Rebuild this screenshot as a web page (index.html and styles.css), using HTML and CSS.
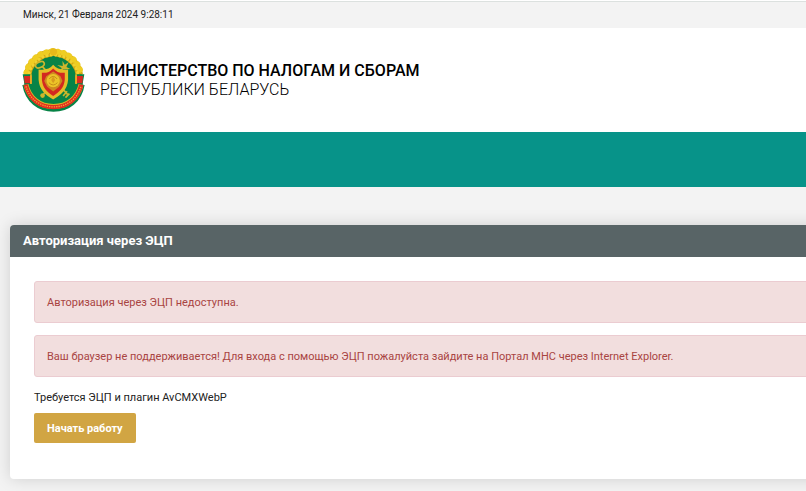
FILE: index.html
```html
<!DOCTYPE html>
<html lang="ru">
<head>
    <meta charset="UTF-8">
    <meta name="viewport" content="width=device-width, initial-scale=1">
    <title>Авторизация через ЭЦП</title>
    <link rel="stylesheet" href="styles.css">
</head>
<body>
    <div class="topbar">Минск, 21 Февраля 2024 9:28:11</div>

    <header class="header">
        <svg class="emblem" viewBox="24 24 190 192" aria-hidden="true">
            <circle cx="119" cy="124" r="88" fill="#078347"/>
            <!-- laurel wreath -->
            <path d="M41 104C45 75 65 55 88 44L119 36L150 44C173 55 193 75 197 104" fill="none" stroke="#d3a714" stroke-width="22"/>
            <path d="M37 98C41 73 60 52 86 39L119 32L152 39C178 52 197 73 201 98" fill="none" stroke="#efcd22" stroke-width="18" stroke-linecap="round" stroke-dasharray="1 17"/>
            <path d="M46 99C50 78 68 60 90 49L119 43L148 49C170 60 188 78 192 99" fill="none" stroke="#f0d22e" stroke-width="9" stroke-linecap="round" stroke-dasharray="1 12"/>
            <circle cx="119" cy="35" r="11" fill="#e6b91a"/>
            <!-- ribbon -->
            <path d="M26 103H54V136H32Z M184 103H212L206 136H184Z" fill="#078347"/>
            <path d="M30 108H54V130H32Z M184 108H208L206 130H184Z" fill="#d92a22"/>
            <path d="M51 103V132M187 103V132" stroke="#e9bd24" stroke-width="5"/>
            <path d="M32 134C40 182 75 209 119 209S198 182 206 134" fill="none" stroke="#078347" stroke-width="14"/>
            <path d="M36 134C46 176 78 200 119 200S192 176 202 134" fill="none" stroke="#d9b527" stroke-width="15"/>
            <path d="M35 134C45 178 78 202 119 202S193 178 203 134" fill="none" stroke="#e32d20" stroke-width="13"/>
            <path d="M36 139C47 178 79 201 119 201S191 178 202 139" fill="none" stroke="#f4a632" stroke-width="4" stroke-dasharray="4 3"/>
            <!-- key, caduceus and their lower ends -->
            <g fill="none" stroke="#cdb62d" stroke-width="5">
                <ellipse cx="78" cy="74" rx="14" ry="8" transform="rotate(-25 78 74)"/>
                <path d="M85 79L162 164M153 76L86 167"/>
                <path d="M148 168L160 154M155 173L167 161"/>
            </g>
            <path d="M150 88L130 75L147 78L146 62L153 74L165 66L158 81L170 87Z" fill="#cdb62d"/>
            <circle cx="86" cy="167" r="7" fill="#cdb62d"/>
            <!-- shield -->
            <path d="M118 74C108 86 94 91 74 88V119C76 149 95 165 118 179C141 165 161 149 163 119V88C143 91 129 86 118 74Z" fill="#e4bd27"/>
            <path d="M118 85C108 96 98 99 84 98V119C86 143 100 157 118 168C136 157 151 143 153 119V98C138 99 128 96 118 85Z" fill="#d32920"/>
            <path d="M118 94L140 109L146 123L136 140L118 155L100 140L91 123L97 109Z" fill="#cf8820"/>
            <circle cx="118" cy="122" r="20" fill="#ecc328"/>
            <path d="M106 117Q118 101 130 117M105 128Q118 142 131 128" fill="none" stroke="#c68d18" stroke-width="3"/>
            <path d="M118 109L124 120L118 130L112 120Z" fill="#d79b1d"/>
        </svg>
        <div class="title">
            <strong>МИНИСТЕРСТВО ПО НАЛОГАМ И СБОРАМ</strong>
            <span>РЕСПУБЛИКИ БЕЛАРУСЬ</span>
        </div>
    </header>

    <nav class="navbar"></nav>

    <main class="panel">
        <h1 class="panel-heading">Авторизация через ЭЦП</h1>
        <div class="panel-body">
            <div class="alert">Авторизация через ЭЦП недоступна.</div>
            <div class="alert">Ваш браузер не поддерживается! Для входа с помощью ЭЦП пожалуйста зайдите на Портал МНС через Internet Explorer.</div>
            <p class="note">Требуется ЭЦП и плагин AvCMXWebP</p>
            <button type="button" class="btn">Начать работу</button>
        </div>
    </main>
</body>
</html>
```
FILE: styles.css
```css
* {
    box-sizing: border-box;
}

body {
    margin: 0;
    overflow-x: hidden;
    background-color: #f3f3f3;
    color: #222;
    font-family: Roboto, "Liberation Sans", sans-serif;
    font-size: 11px;
    line-height: 16px;
}

.topbar {
    padding: 7px 23px 5px;
    box-shadow: inset 0 1px #fff, inset 0 2px #dce1df;
    font-size: 10px;
}

.header {
    display: flex;
    align-items: center;
    gap: 15px;
    padding: 20px 22px;
    background-color: #fff;
}

.emblem {
    width: 63px;
    height: 64px;
}

.title {
    display: flex;
    flex-direction: column;
    color: #000;
    font-size: 16px;
    line-height: 19px;
}

.title strong {
    font-weight: 500;
}

.title span {
    font-weight: 300;
}

.navbar {
    height: 55px;
    background-color: #079389;
}

/* the panel runs past the right edge of the window */
.panel {
    margin: 38px -40px 12px 10px;
    border-radius: 4px;
    background-color: #fff;
    box-shadow: 0 0 16px rgba(0, 0, 0, 0.15);
}

.panel-heading {
    margin: 0;
    padding: 8px 13px;
    border-radius: 4px 4px 0 0;
    background-color: #586466;
    color: #fff;
    font-size: 13px;
    font-weight: 700;
}

.panel-body {
    padding: 24px 24px 36px;
}

.alert {
    margin-bottom: 12px;
    padding: 13px 12px 11px;
    border: 1px solid #ebccd1;
    border-radius: 3px;
    background-color: #f2dede;
    color: #a94442;
}

.note {
    margin: 0;
    padding: 1px 0 7px;
}

.btn {
    display: block;
    padding: 8px 13px 6px;
    border: none;
    border-radius: 2px;
    background-color: #d1a543;
    color: #fff;
    font-family: inherit;
    font-size: 11px;
    font-weight: 700;
    line-height: 16px;
    cursor: pointer;
}

.btn:hover {
    background-color: #bf9435;
}
```
